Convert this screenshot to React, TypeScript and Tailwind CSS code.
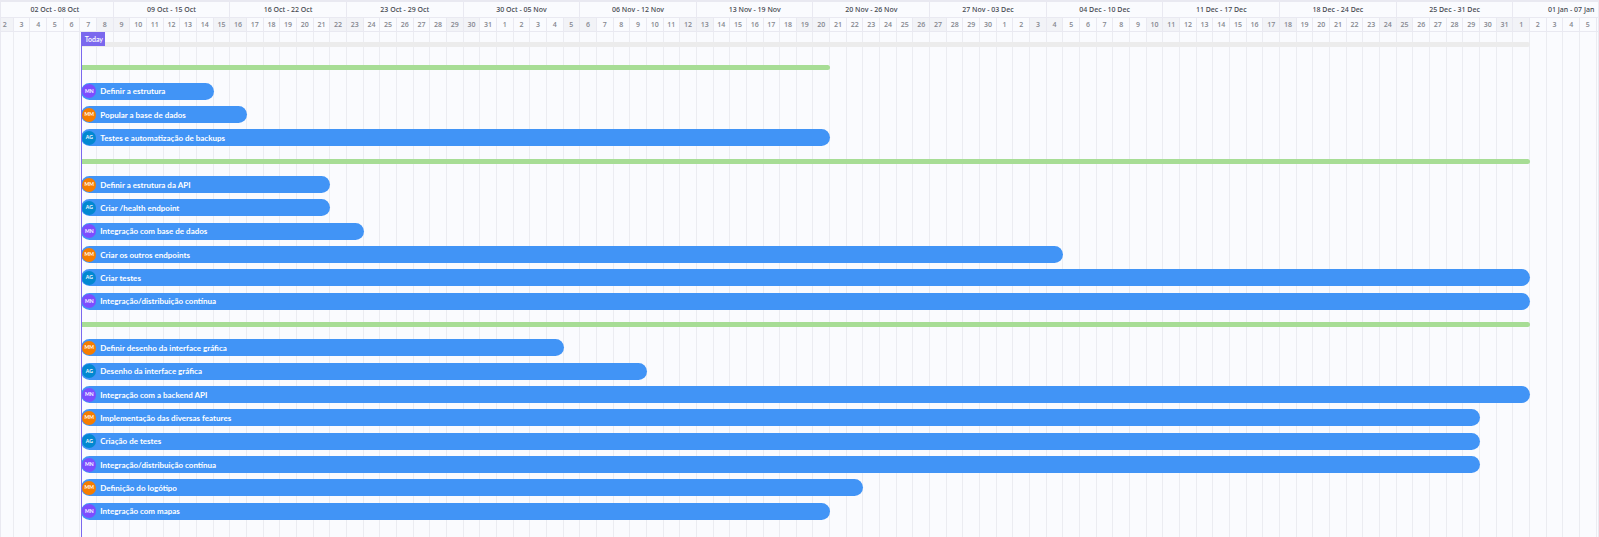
type Assignee = "MN" | "MM" | "AG";
type Row =
  | { kind: "project" | "group"; end: number }
  | { kind: "task"; end: number; title: string; who: Assignee };

const DAY_COUNT = 98;
const LABELLED_DAYS = 96;
const TODAY = 5;

const weeks = [
  "02 Oct - 08 Oct",
  "09 Oct - 15 Oct",
  "16 Oct - 22 Oct",
  "23 Oct - 29 Oct",
  "30 Oct - 05 Nov",
  "06 Nov - 12 Nov",
  "13 Nov - 19 Nov",
  "20 Nov - 26 Nov",
  "27 Nov - 03 Dec",
  "04 Dec - 10 Dec",
  "11 Dec - 17 Dec",
  "18 Dec - 24 Dec",
  "25 Dec - 31 Dec",
  "01 Jan - 07 Jan",
];

const days = Array.from({ length: DAY_COUNT }, (_, i) =>
  new Date(Date.UTC(2023, 9, 2 + i)).getUTCDate(),
);

// `end` is the number of days after 2 October at which the bar stops.
const rows: Row[] = [
  { kind: "project", end: 92 },
  { kind: "group", end: 50 },
  { kind: "task", end: 13, title: "Definir a estrutura", who: "MN" },
  { kind: "task", end: 15, title: "Popular a base de dados", who: "MM" },
  { kind: "task", end: 50, title: "Testes e automatização de backups", who: "AG" },
  { kind: "group", end: 92 },
  { kind: "task", end: 20, title: "Definir a estrutura da API", who: "MM" },
  { kind: "task", end: 20, title: "Criar /health endpoint", who: "AG" },
  { kind: "task", end: 22, title: "Integração com base de dados", who: "MN" },
  { kind: "task", end: 64, title: "Criar os outros endpoints", who: "MM" },
  { kind: "task", end: 92, title: "Criar testes", who: "AG" },
  { kind: "task", end: 92, title: "Integração/distribuição contínua", who: "MN" },
  { kind: "group", end: 92 },
  { kind: "task", end: 34, title: "Definir desenho da interface gráfica", who: "MM" },
  { kind: "task", end: 39, title: "Desenho da interface gráfica", who: "AG" },
  { kind: "task", end: 92, title: "Integração com a backend API", who: "MN" },
  { kind: "task", end: 89, title: "Implementação das diversas features", who: "MM" },
  { kind: "task", end: 89, title: "Criação de testes", who: "AG" },
  { kind: "task", end: 89, title: "Integração/distribuição contínua", who: "MN" },
  { kind: "task", end: 52, title: "Definição do logótipo", who: "MM" },
  { kind: "task", end: 50, title: "Integração com mapas", who: "MN" },
];

const avatarColor: Record<Assignee, string> = {
  MN: "bg-[#7c4dff]",
  MM: "bg-[#f57c00]",
  AG: "bg-[#0288d1]",
};

const dayGrid = "grid grid-cols-[repeat(98,minmax(0,1fr))]";

function Bar({ row }: { row: Row }) {
  const span = { gridColumn: `${TODAY + 1} / ${row.end + 1}` };
  if (row.kind !== "task") {
    return (
      <div
        style={span}
        className={`ml-px h-[5px] rounded-r-full ${row.kind === "project" ? "bg-[#ececec]" : "bg-[#a7dd95]"}`}
      />
    );
  }
  return (
    <div
      style={span}
      className="ml-px flex h-[17px] items-center gap-1 rounded-full bg-[#4194f6] pl-px font-['Lato',sans-serif] text-[8px] leading-none font-bold whitespace-nowrap text-white"
    >
      <span
        className={`flex size-[14px] shrink-0 items-center justify-center rounded-full text-[5px] ${avatarColor[row.who]}`}
      >
        {row.who}
      </span>
      <span>{row.title}</span>
    </div>
  );
}

export default function App() {
  return (
    <main className="min-h-screen overflow-hidden border-x border-t-2 border-[#e9e9f1] bg-[#fafbfe] font-['Open_Sans','Noto_Sans',sans-serif]">
      <div className="-ml-1 flex min-h-[535px] w-[calc(100%+36px)] flex-col">
        <header>
          <div className={`${dayGrid} h-4 overflow-hidden border-b border-[#e9e9f1]`}>
            {weeks.map((week, i) => (
              <div
                key={week}
                style={{ gridColumn: `${i * 7 + 1} / ${i * 7 + 8}` }}
                className="flex items-center justify-center border-r border-[#e9e9f1] font-['Noto_Sans',sans-serif] text-[7px] leading-none font-medium whitespace-nowrap text-[#44474e]"
              >
                {week}
              </div>
            ))}
          </div>
          <div className={`${dayGrid} h-[14px] border-b border-[#e9e9f1]`}>
            {days.map((day, i) => (
              <div
                key={i}
                className={`flex items-center justify-center overflow-hidden border-r border-[#e9e9f1] text-[7px] leading-none font-semibold text-[#85878f] ${i % 7 === 6 || i % 7 === 0 ? "bg-[#f2f3f7]" : ""}`}
              >
                {i < LABELLED_DAYS ? day : null}
              </div>
            ))}
          </div>
        </header>
        <section className="grid flex-1 grid-cols-1">
          <div aria-hidden="true" className={`${dayGrid} col-start-1 row-start-1`}>
            {days.map((_, i) => (
              <div key={i} className="border-r border-[#ebecf1]" />
            ))}
          </div>
          <div className="relative col-start-1 row-start-1">
            <div className="grid h-[491px] auto-rows-fr pt-px">
              {rows.map((row, i) => (
                <div key={i} className={`${dayGrid} items-center`}>
                  <Bar row={row} />
                </div>
              ))}
            </div>
            <div className={`${dayGrid} pointer-events-none absolute inset-0`}>
              <div className="col-start-6 ml-px border-l border-[#7b68ee]">
                <span className="flex h-[14px] w-[23px] items-center justify-center bg-[#7b68ee] font-['Lato',sans-serif] text-[7px] leading-none font-semibold text-white">
                  Today
                </span>
              </div>
            </div>
          </div>
        </section>
      </div>
    </main>
  );
}
